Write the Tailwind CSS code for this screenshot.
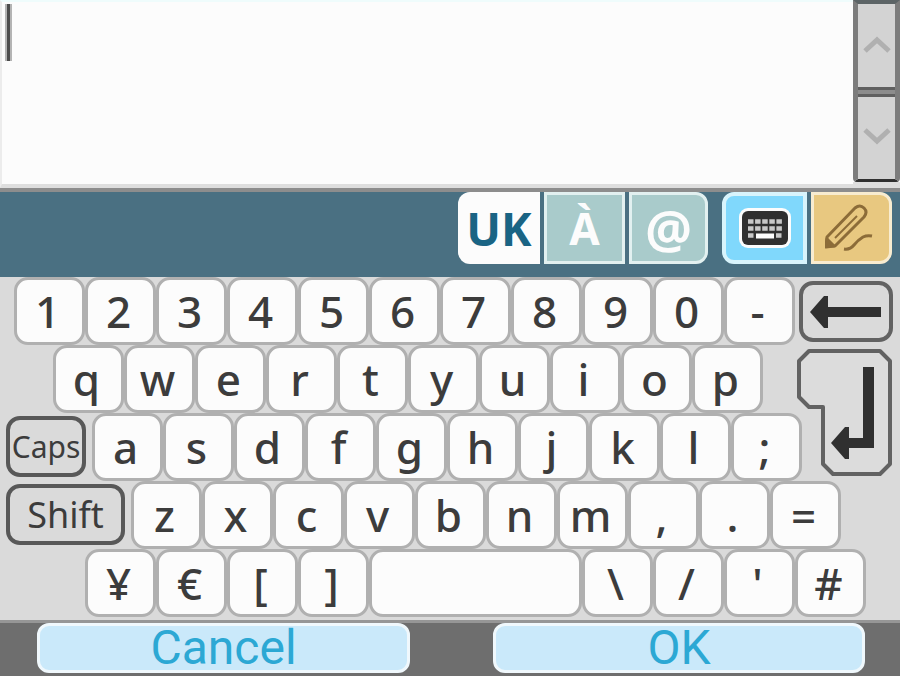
<!DOCTYPE html>
<html lang="en">

<head>
    <meta charset="utf-8">
    <meta name="viewport" content="width=device-width, initial-scale=1">
    <title>Keyboard</title>
    <script src="https://cdn.jsdelivr.net/npm/@tailwindcss/browser@4"></script>
</head>

<body class="min-h-screen flex flex-col bg-[#6e6e6e] font-['Noto_Sans',sans-serif] text-[#3c3c3c]">

    <!-- Text entry -->
    <div class="flex h-[192px] bg-[#fcfcfc] border-b-4 border-[#8d8d8d]">
        <div class="relative flex-1 border-l-2 border-t-2 border-b-4 border-l-[#ececec] border-t-[#effcfc] border-b-[#dedede]">
            <textarea aria-label="Text" class="block w-full h-full resize-none outline-none pl-3 text-[44px] leading-[60px]"></textarea>
            <div class="absolute left-[3px] top-[2px] w-[7px] h-[57px] bg-[#4c4c4c] border-x-2 border-[#b4b4b4]"></div>
        </div>
        <div class="flex flex-col w-[47px] border-b-6 border-[#dedede]">
            <div class="flex flex-col flex-1 border-x-5 border-t-4 border-b-3 border-x-[#7c7c7c] border-t-[#5c6466] border-b-[#303030] rounded-b-sm">
                <button aria-label="Scroll up" class="flex-1 flex items-center justify-center bg-[#d3d3d3]">
                    <svg class="w-7 h-5" viewBox="0 0 28 20" fill="none" stroke="#b0b0b0" stroke-width="5">
                        <path d="M2 16L14 5L26 16" />
                    </svg>
                </button>
                <div class="h-[10px] bg-[#8c8c8c] border-y-3 border-[#606060]"></div>
                <button aria-label="Scroll down" class="flex-1 flex items-center justify-center bg-[#d3d3d3]">
                    <svg class="w-7 h-5" viewBox="0 0 28 20" fill="none" stroke="#b0b0b0" stroke-width="5">
                        <path d="M2 2L14 13L26 2" />
                    </svg>
                </button>
            </div>
        </div>
    </div>

    <!-- Input modes -->
    <div class="flex justify-end h-[85px] pr-2 bg-[#4a7082]">
        <div class="flex gap-1 h-[72px] leading-[72px] font-bold">
            <button class="w-[82px] rounded-l-xl bg-[#fcfcfc] text-[#1a6484] text-[46px]">UK</button>
            <button class="w-[81px] flex items-center justify-center border-3 border-[#e2f0f0] bg-[#a9cbcb] text-[#fcfcfc] text-[44px]">À</button>
            <button class="w-[79px] flex items-center justify-center border-3 border-[#e2f0f0] rounded-r-xl bg-[#a9cbcb] text-[#fcfcfc] text-[52px]">@</button>
        </div>
        <div class="flex gap-1 h-[72px] ml-[14px]">
            <button aria-label="Keyboard" class="w-[85px] flex items-center justify-center border-4 border-[#d8f4fc] rounded-l-xl bg-[#80d8fc]">
                <svg class="w-[54px] h-10" viewBox="0 0 54 40">
                    <rect x="1" y="0" width="52" height="40" rx="9" fill="#fcfcfc" />
                    <rect x="4" y="3" width="46" height="34" rx="6" fill="#303030" />
                    <path d="M10 13.500H44M10 20.500H44M10 27.500H16M38 27.500H44" stroke="#c8c8c8" stroke-width="4.500" stroke-dasharray="5.500 1.600" />
                    <path d="M18 28H36" stroke="#fcfcfc" stroke-width="5" />
                </svg>
            </button>
            <button aria-label="Handwriting" class="w-[81px] flex items-center justify-center border-3 border-[#f8ecd0] rounded-r-xl bg-[#e8c880]">
                <svg class="w-[54px] h-[54px]" viewBox="0 0 54 54" fill="none" stroke="#8c6c38" stroke-width="3" stroke-linejoin="round">
                    <path d="M1 45L2 36L30 7Q35 3 39 7Q43 11 39 16L10 45Z" />
                    <path d="M10 37L32 15" stroke-width="2" />
                    <path d="M1 46L2 38L9 45Z" fill="#8c6c38" />
                    <path d="M19 48Q25 49 29 44T38 36Q42 34 47 35" />
                </svg>
            </button>
        </div>
    </div>

    <!-- Keys: fr values are the key widths, the empty divs keep the stagger -->
    <div class="grid grid-cols-[796fr_97fr_7fr] auto-rows-[68px] pb-[3px] bg-[#dadada] border-b-3 border-[#969696] box-content leading-[52px] font-medium">

        <div class="col-span-3 grid grid-cols-[14fr_repeat(11,71fr)_105fr] text-[44px] [&>button]:border-3 [&>button]:border-[#b0b0b0] [&>button]:rounded-[14px] [&>button]:bg-[#fcfcfc] [&>button]:pr-1">
            <div></div>
            <button>1</button>
            <button>2</button>
            <button>3</button>
            <button>4</button>
            <button>5</button>
            <button>6</button>
            <button>7</button>
            <button>8</button>
            <button>9</button>
            <button>0</button>
            <button>-</button>
            <div class="pl-1 pr-[7px] pt-1 pb-[3px]">
                <button aria-label="Backspace" class="w-full h-full flex items-center justify-center border-4 border-[#626262] rounded-[14px]">
                    <svg class="w-[74px] h-8" viewBox="0 0 74 32" fill="#303030">
                        <path d="M1 16L15 0H19V11H72V21H19V32H15Z" />
                    </svg>
                </button>
            </div>
        </div>

        <div class="col-start-1 col-span-3 row-start-2 grid grid-cols-[53fr_repeat(10,71fr)_137fr] text-[44px] [&>button]:border-3 [&>button]:border-[#b0b0b0] [&>button]:rounded-[14px] [&>button]:bg-[#fcfcfc] [&>button]:pr-1">
            <div></div>
            <button>q</button>
            <button>w</button>
            <button>e</button>
            <button>r</button>
            <button>t</button>
            <button>y</button>
            <button>u</button>
            <button>i</button>
            <button>o</button>
            <button>p</button>
            <div></div>
        </div>

        <div class="col-start-1 col-span-3 row-start-3 grid grid-cols-[92fr_repeat(10,71fr)_98fr] text-[44px] [&>button]:border-3 [&>button]:border-[#b0b0b0] [&>button]:rounded-[14px] [&>button]:bg-[#fcfcfc] [&>button]:pr-1">
            <div class="pl-[6px] pr-[6px] pt-[3px] pb-1">
                <button class="w-full h-full flex items-center justify-center border-4 border-[#585858] rounded-[14px] text-[30px] font-normal">Caps</button>
            </div>
            <button>a</button>
            <button>s</button>
            <button>d</button>
            <button>f</button>
            <button>g</button>
            <button>h</button>
            <button>j</button>
            <button>k</button>
            <button>l</button>
            <button>;</button>
            <div></div>
        </div>

        <button aria-label="Enter" class="col-start-2 row-start-2 row-span-2">
            <svg class="w-full h-[136px]" viewBox="0 0 97 136" preserveAspectRatio="none">
                <path d="M13 6H84L94 16V119L84 129H37L27 119V62H13L3 52V16Z" fill="#dcdcdc" stroke="#626262" stroke-width="4" stroke-linejoin="round" />
                <path d="M67 22H78V103H53V114H49L35 98L49 82H53V93H67Z" fill="#303030" />
            </svg>
        </button>

        <div class="col-start-1 col-span-3 row-start-4 grid grid-cols-[131fr_repeat(10,71fr)_59fr] text-[44px] [&>button]:border-3 [&>button]:border-[#b0b0b0] [&>button]:rounded-[14px] [&>button]:bg-[#fcfcfc] [&>button]:pr-1">
            <div class="pl-[6px] pr-[6px] pt-[3px] pb-1">
                <button class="w-full h-full flex items-center justify-center border-4 border-[#585858] rounded-[14px] text-[36px] font-normal">Shift</button>
            </div>
            <button>z</button>
            <button>x</button>
            <button>c</button>
            <button>v</button>
            <button>b</button>
            <button>n</button>
            <button>m</button>
            <button>,</button>
            <button>.</button>
            <button>=</button>
            <div></div>
        </div>

        <div class="col-start-1 col-span-3 row-start-5 grid grid-cols-[85fr_repeat(4,71fr)_213fr_repeat(4,71fr)_34fr] text-[44px] [&>button]:border-3 [&>button]:border-[#b0b0b0] [&>button]:rounded-[14px] [&>button]:bg-[#fcfcfc] [&>button]:pr-1">
            <div></div>
            <button>¥</button>
            <button>€</button>
            <button>[</button>
            <button>]</button>
            <button aria-label="Space"></button>
            <button>\</button>
            <button>/</button>
            <button>'</button>
            <button>#</button>
            <div></div>
        </div>
    </div>

    <!-- Actions -->
    <div class="grid grid-cols-[37fr_373fr_83fr_372fr_35fr] font-[Roboto,sans-serif] text-[48px] leading-[44px] text-[#2ca8d4]">
        <button class="col-start-2 h-[50px] border-3 border-[#f0f8fc] rounded-xl bg-[#cae9fa]">Cancel</button>
        <button class="col-start-4 h-[50px] border-3 border-[#f0f8fc] rounded-xl bg-[#cae9fa]">OK</button>
    </div>

</body>

</html>
